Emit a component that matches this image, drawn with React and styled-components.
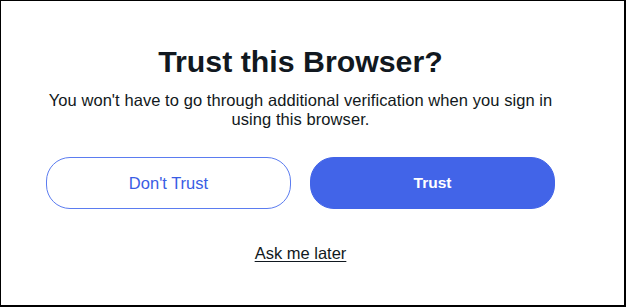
import React from "react";
import styled, { createGlobalStyle } from "styled-components";

const Global = createGlobalStyle`
  html, body { margin: 0; padding: 0; background: #fff; }
  body { font-family: "Liberation Sans", Arial, sans-serif; }
  * { box-sizing: border-box; }
`;

const Frame = styled.div`
  width: 626px;
  height: 307px;
  border-style: solid;
  border-color: #000;
  border-width: 1px 2px 2px 1px;
  background: #fff;
  display: flex;
  flex-direction: column;
  align-items: center;
  padding: 43px 69px 0 45px;
`;

const Title = styled.h1`
  margin: 0;
  font-size: 30.3px;
  line-height: 36px;
  font-weight: 700;
  color: #111820;
  text-align: center;
`;

const Subtitle = styled.p`
  margin: 11px 0 0;
  font-size: 16.5px;
  line-height: 19px;
  letter-spacing: 0.07px;
  color: #111820;
  text-align: center;
`;

const Actions = styled.div`
  margin-top: 28px;
  width: 100%;
  display: grid;
  grid-template-columns: 1fr 1fr;
  gap: 19px;
`;

const Button = styled.button`
  height: 52px;
  border-radius: 24px;
  font-family: inherit;
  font-size: ${(p) => (p.$primary ? "15.5px" : "16.5px")};
  font-weight: ${(p) => (p.$primary ? 700 : 400)};
  color: ${(p) => (p.$primary ? "#fff" : "#3a5de4")};
  background: ${(p) => (p.$primary ? "#4264e8" : "#fff")};
  border: 1px solid ${(p) => (p.$primary ? "#4264e8" : "#5b7cf0")};
  cursor: pointer;
`;

const LaterLink = styled.a`
  margin-top: 34px;
  font-size: 16.5px;
  line-height: 20px;
  color: #111820;
  text-decoration: underline;
  text-underline-offset: 2px;
  cursor: pointer;
`;

export default function App() {
  return (
    <>
      <Global />
      <Frame>
        <Title>Trust this Browser?</Title>
        <Subtitle>
          You won't have to go through additional verification when you sign in
          using this browser.
        </Subtitle>
        <Actions>
          <Button>Don't Trust</Button>
          <Button $primary>Trust</Button>
        </Actions>
        <LaterLink>Ask me later</LaterLink>
      </Frame>
    </>
  );
}
